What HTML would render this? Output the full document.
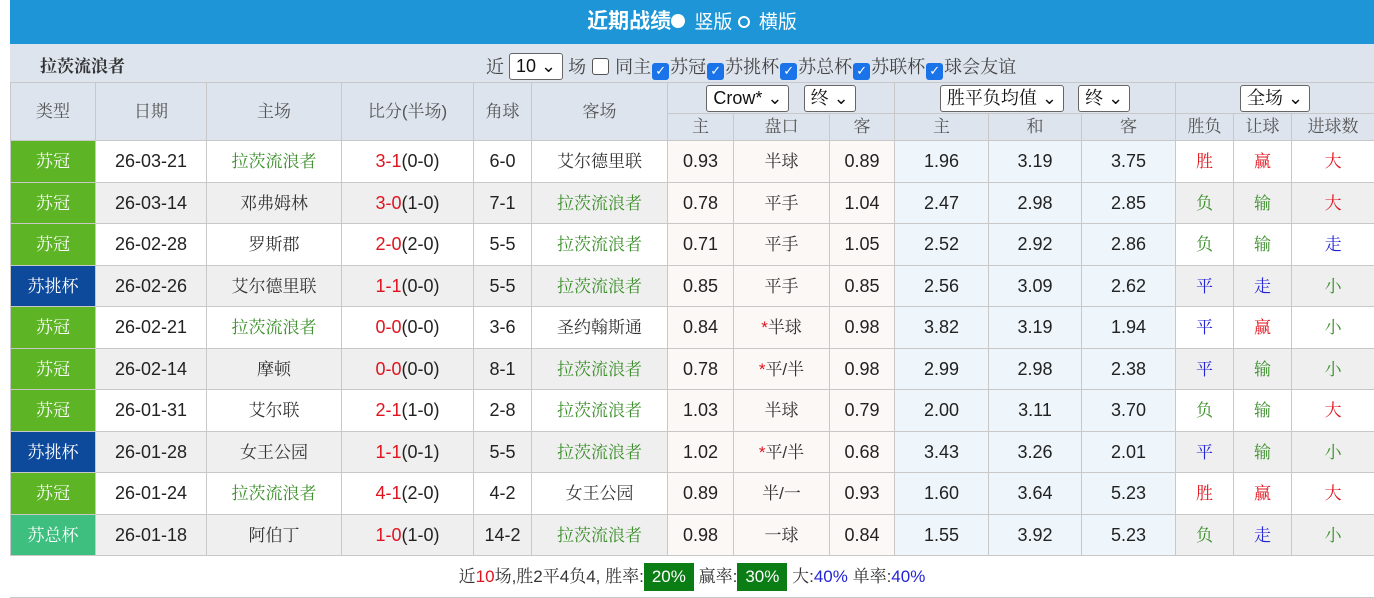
<!DOCTYPE html>
<html><head><meta charset="utf-8">
<style>
*{margin:0;padding:0;box-sizing:border-box}
body{width:1374px;height:598px;background:#fff;font-family:"Liberation Sans","Noto Serif CJK SC",serif;color:#333;overflow:hidden;position:relative}
.wrap{position:absolute;left:10px;top:0;width:1364px}
.hd{height:44px;background:#1e95d6;color:#fff;text-align:center;font-size:19px;line-height:44px;font-family:"Liberation Sans","Noto Sans CJK SC",sans-serif}
.hd b{font-size:21px}
.rd{display:inline-block;width:14px;height:14px;border-radius:50%;vertical-align:0px;margin:0 4px 0 0}
.bar{height:38px;background:#dde4ed;position:relative;font-size:18px;line-height:46px}
.bar .t{position:absolute;left:30px;font-weight:bold;font-size:17px}
.bar .f{position:absolute;left:476px;top:0;color:#444}
.sel{display:inline-block;border:1px solid #666;border-radius:3px;background:#fff;height:27px;line-height:25px;padding:0 6px;font-size:18px;vertical-align:1px;color:#111}
.cb{display:inline-block;width:17px;height:17px;border-radius:3px;vertical-align:-2px;background:#1a73e8;color:#fff;font-size:13px;line-height:17px;text-align:center;font-family:"DejaVu Sans",sans-serif;margin:0 1px}
.cb.e{background:#fff;border:1.5px solid #555}
table{border-collapse:collapse;table-layout:fixed;width:1364px}
td{border:1px solid #c8c8c8;text-align:center;font-size:17px;height:41.5px;white-space:nowrap;overflow:hidden;line-height:20px;padding-top:2px}
.th td{background:#dde4ed;color:#555;height:31px;padding-top:0}
.th2 td{height:27px}
.n{font-family:"Liberation Sans","Noto Sans CJK SC",sans-serif;color:#222;font-size:18px;padding-top:0}
.g{color:#3b8f2a}
.red{color:#e0141e}
.bl{color:#2323d8}
.c1{background:#5db525;color:#fff}
.c2{background:#0d4a9c;color:#fff}
.c3{background:#3fbf7f;color:#fff}
.o1{background:#fcf8f5}
.o2{background:#eff6fb}
tr.gr td{background:#efefef}
tr.gr td.o1{background:#fcf8f5}
tr.gr td.o2{background:#eff6fb}
tr.gr td.c1{background:#5db525}tr.gr td.c2{background:#0d4a9c}tr.gr td.c3{background:#3fbf7f}
.ft{height:42px;text-align:center;line-height:42px;font-size:17px;border-bottom:1px solid #c8c8c8}
.gb{display:inline-block;background:#0a7d14;color:#fff;padding:0 8px;line-height:28px;font-family:"Liberation Sans",sans-serif}
</style></head><body>
<div class="wrap">
<div class="hd"><b>近期战绩</b><span class="rd" style="background:#fff"></span> 竖版 <span class="rd" style="border:2px solid #fff;width:12px;height:12px"></span> 横版</div>
<div class="bar"><span class="t">拉茨流浪者</span><span class="f">近 <span class="sel">10 ⌄</span> 场 <span class="cb e"></span> 同主<span class="cb">✓</span>苏冠<span class="cb">✓</span>苏挑杯<span class="cb">✓</span>苏总杯<span class="cb">✓</span>苏联杯<span class="cb">✓</span>球会友谊</span></div>
<table>
<colgroup><col style="width:85px"><col style="width:111px"><col style="width:135px"><col style="width:132px"><col style="width:58px"><col style="width:136px"><col style="width:66px"><col style="width:96px"><col style="width:65px"><col style="width:94px"><col style="width:93px"><col style="width:94px"><col style="width:58px"><col style="width:58px"><col style="width:83px"></colgroup>
<tr class="th"><td rowspan="2">类型</td><td rowspan="2">日期</td><td rowspan="2">主场</td><td rowspan="2">比分(半场)</td><td rowspan="2">角球</td><td rowspan="2">客场</td>
<td colspan="3"><span class="sel">Crow* ⌄</span> &nbsp; <span class="sel">终 ⌄</span></td>
<td colspan="3"><span class="sel">胜平负均值 ⌄</span> &nbsp; <span class="sel">终 ⌄</span></td>
<td colspan="3"><span class="sel">全场 ⌄</span></td></tr>
<tr class="th th2"><td>主</td><td>盘口</td><td>客</td><td>主</td><td>和</td><td>客</td><td>胜负</td><td>让球</td><td>进球数</td></tr>
<tr><td class="c1">苏冠</td><td class="n">26-03-21</td><td class="g">拉茨流浪者</td><td class="n"><span class="red">3-1</span>(0-0)</td><td class="n">6-0</td><td>艾尔德里联</td><td class="n o1">0.93</td><td class="o1">半球</td><td class="n o1">0.89</td><td class="n o2">1.96</td><td class="n o2">3.19</td><td class="n o2">3.75</td><td class="red">胜</td><td class="red">赢</td><td class="red">大</td></tr>
<tr class="gr"><td class="c1">苏冠</td><td class="n">26-03-14</td><td>邓弗姆林</td><td class="n"><span class="red">3-0</span>(1-0)</td><td class="n">7-1</td><td class="g">拉茨流浪者</td><td class="n o1">0.78</td><td class="o1">平手</td><td class="n o1">1.04</td><td class="n o2">2.47</td><td class="n o2">2.98</td><td class="n o2">2.85</td><td class="g">负</td><td class="g">输</td><td class="red">大</td></tr>
<tr><td class="c1">苏冠</td><td class="n">26-02-28</td><td>罗斯郡</td><td class="n"><span class="red">2-0</span>(2-0)</td><td class="n">5-5</td><td class="g">拉茨流浪者</td><td class="n o1">0.71</td><td class="o1">平手</td><td class="n o1">1.05</td><td class="n o2">2.52</td><td class="n o2">2.92</td><td class="n o2">2.86</td><td class="g">负</td><td class="g">输</td><td class="bl">走</td></tr>
<tr class="gr"><td class="c2">苏挑杯</td><td class="n">26-02-26</td><td>艾尔德里联</td><td class="n"><span class="red">1-1</span>(0-0)</td><td class="n">5-5</td><td class="g">拉茨流浪者</td><td class="n o1">0.85</td><td class="o1">平手</td><td class="n o1">0.85</td><td class="n o2">2.56</td><td class="n o2">3.09</td><td class="n o2">2.62</td><td class="bl">平</td><td class="bl">走</td><td class="g">小</td></tr>
<tr><td class="c1">苏冠</td><td class="n">26-02-21</td><td class="g">拉茨流浪者</td><td class="n"><span class="red">0-0</span>(0-0)</td><td class="n">3-6</td><td>圣约翰斯通</td><td class="n o1">0.84</td><td class="o1"><span class="red">*</span>半球</td><td class="n o1">0.98</td><td class="n o2">3.82</td><td class="n o2">3.19</td><td class="n o2">1.94</td><td class="bl">平</td><td class="red">赢</td><td class="g">小</td></tr>
<tr class="gr"><td class="c1">苏冠</td><td class="n">26-02-14</td><td>摩顿</td><td class="n"><span class="red">0-0</span>(0-0)</td><td class="n">8-1</td><td class="g">拉茨流浪者</td><td class="n o1">0.78</td><td class="o1"><span class="red">*</span>平/半</td><td class="n o1">0.98</td><td class="n o2">2.99</td><td class="n o2">2.98</td><td class="n o2">2.38</td><td class="bl">平</td><td class="g">输</td><td class="g">小</td></tr>
<tr><td class="c1">苏冠</td><td class="n">26-01-31</td><td>艾尔联</td><td class="n"><span class="red">2-1</span>(1-0)</td><td class="n">2-8</td><td class="g">拉茨流浪者</td><td class="n o1">1.03</td><td class="o1">半球</td><td class="n o1">0.79</td><td class="n o2">2.00</td><td class="n o2">3.11</td><td class="n o2">3.70</td><td class="g">负</td><td class="g">输</td><td class="red">大</td></tr>
<tr class="gr"><td class="c2">苏挑杯</td><td class="n">26-01-28</td><td>女王公园</td><td class="n"><span class="red">1-1</span>(0-1)</td><td class="n">5-5</td><td class="g">拉茨流浪者</td><td class="n o1">1.02</td><td class="o1"><span class="red">*</span>平/半</td><td class="n o1">0.68</td><td class="n o2">3.43</td><td class="n o2">3.26</td><td class="n o2">2.01</td><td class="bl">平</td><td class="g">输</td><td class="g">小</td></tr>
<tr><td class="c1">苏冠</td><td class="n">26-01-24</td><td class="g">拉茨流浪者</td><td class="n"><span class="red">4-1</span>(2-0)</td><td class="n">4-2</td><td>女王公园</td><td class="n o1">0.89</td><td class="o1">半/一</td><td class="n o1">0.93</td><td class="n o2">1.60</td><td class="n o2">3.64</td><td class="n o2">5.23</td><td class="red">胜</td><td class="red">赢</td><td class="red">大</td></tr>
<tr class="gr"><td class="c3">苏总杯</td><td class="n">26-01-18</td><td>阿伯丁</td><td class="n"><span class="red">1-0</span>(1-0)</td><td class="n">14-2</td><td class="g">拉茨流浪者</td><td class="n o1">0.98</td><td class="o1">一球</td><td class="n o1">0.84</td><td class="n o2">1.55</td><td class="n o2">3.92</td><td class="n o2">5.23</td><td class="g">负</td><td class="bl">走</td><td class="g">小</td></tr>
</table>
<div class="ft">近<span class="red">10</span>场,胜2平4负4, 胜率:<span class="gb">20%</span> 赢率:<span class="gb">30%</span> 大:<span class="bl">40%</span> 单率:<span class="bl">40%</span></div>
</div>
</body></html>
